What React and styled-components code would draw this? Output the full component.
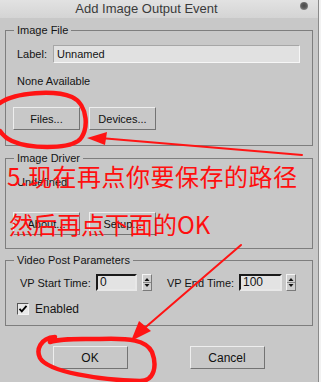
import React from "react";
import styled, { createGlobalStyle } from "styled-components";

const GlobalStyle = createGlobalStyle`
	html, body {
		margin: 0;
		padding: 0;
		background: #c8c8c8;
	}
	body {
		font-family: "Liberation Sans", Arial, sans-serif;
		font-size: 11px;
		color: #141414;
	}
`;

const Page = styled.div`
	position: relative;
	display: flex;
	width: 321px;
	height: 382px;
	overflow: hidden;
`;

const Dialog = styled.div`
	width: 318px;
	flex-shrink: 0;
	display: flex;
	flex-direction: column;
	background: #c8c8c8;
`;

const Edge = styled.div`
	flex: 1;
	background: #f2f2f2;
	border-left: 1px solid #8a8a8a;
`;

const TitleBar = styled.div`
	height: 18px;
	display: flex;
	align-items: flex-start;
	background: linear-gradient(#e2e2e2, #d4d4d4);
`;

const Title = styled.div`
	flex: 1;
	line-height: 18px;
	font-size: 13px;
	color: #3a3a3a;
	text-align: center;
	padding-right: 7px;
`;

const Dot = styled.div`
	width: 8px;
	height: 8px;
	margin: 2px 10px 0 0;
	border-radius: 50%;
	background: radial-gradient(circle at 50% 45%, #4a4a4a 0, #5e5e5e 45%, #b4b4b4 100%);
`;

const Group = styled.div`
	margin: ${(p) => p.$top}px 5px 0;
	border: 1px solid #7e7e7e;
	display: flex;
	flex-direction: column;
`;

const GroupTitle = styled.div`
	align-self: flex-start;
	margin: -8px 0 0 8px;
	padding: 0 3px;
	line-height: 14px;
	background: #c8c8c8;
`;

const GroupBody = styled.div`
	display: flex;
	flex-direction: column;
	padding: ${(p) => p.$pt}px 12px ${(p) => p.$pb}px 11px;
`;

const Row = styled.div`
	display: flex;
	align-items: center;
	margin-top: ${(p) => p.$mt || 0}px;
`;

const FieldLabel = styled.span`
	width: ${(p) => p.$w}px;
	flex-shrink: 0;
	margin-left: ${(p) => p.$ml || 0}px;
	line-height: 14px;
`;

const Text = styled.div`
	line-height: 14px;
	margin-top: ${(p) => p.$mt || 0}px;
`;

const LabelInput = styled.div`
	width: 247px;
	height: 18px;
	box-sizing: border-box;
	border: 1px solid;
	border-color: #a6a6a6 #f6f6f6 #f6f6f6 #a6a6a6;
	background: #e1e1e1;
	padding-left: 3px;
	line-height: 16px;
`;

const NumInput = styled.div`
	width: ${(p) => p.$w}px;
	height: 17px;
	box-sizing: border-box;
	border: 2px solid;
	border-color: #1a1a1a #e8e8e8 #e8e8e8 #1a1a1a;
	background: #e3e3e3;
	padding-left: 2px;
	line-height: 13px;
	font-size: 12px;
`;

const Spinner = styled.div`
	width: 10px;
	height: 17px;
	margin-left: ${(p) => p.$ml}px;
	box-sizing: border-box;
	border: 1px solid;
	border-color: #f4f4f4 #7a7a7a #7a7a7a #f4f4f4;
	background: #cfcfcf;
	display: flex;
	flex-direction: column;
	align-items: center;
	justify-content: center;
`;

const ButtonRow = styled.div`
	display: flex;
	gap: 9px;
	margin: ${(p) => p.$mt}px 0 0 -4px;
`;

const Button = styled.div`
	width: ${(p) => p.$w || 67}px;
	height: 23px;
	box-sizing: border-box;
	border: 1px solid;
	border-color: #eeeeee #737373 #737373 #eeeeee;
	background: #c8c8c8;
	display: flex;
	align-items: center;
	justify-content: center;
	font-size: ${(p) => p.$fs || 11}px;
	color: #101010;
`;

const CheckRow = styled.div`
	display: flex;
	align-items: center;
	gap: 6px;
	margin-top: 11px;
	line-height: 14px;
	font-size: 12px;
`;

const CheckBox = styled.div`
	width: 12px;
	height: 12px;
	box-sizing: border-box;
	border: 1px solid;
	border-color: #555555 #f2f2f2 #f2f2f2 #555555;
	background: #e8e8e8;
	display: flex;
	align-items: center;
	justify-content: center;
`;

const Footer = styled.div`
	display: flex;
	justify-content: center;
	gap: 62px;
	margin-top: 20px;
	padding-right: 1px;
`;

const Ink = styled.svg`
	position: absolute;
	left: 0;
	top: 0;
	pointer-events: none;
`;

const Note = styled.div`
	position: absolute;
	left: ${(p) => p.$x}px;
	top: ${(p) => p.$y}px;
	font-family: "Noto Sans CJK SC", "Noto Sans", sans-serif;
	font-size: 24px;
	line-height: 24px;
	font-weight: 400;
	letter-spacing: ${(p) => p.$ls || 0}px;
	color: #ff0f0f;
	white-space: nowrap;
	pointer-events: none;
`;

const SpinArrows = () => (
	<svg width="8" height="15" viewBox="0 0 8 15">
		<path d="M4 3 L6.5 6 L1.5 6 Z" fill="#111" />
		<line x1="0" y1="7.5" x2="8" y2="7.5" stroke="#8a8a8a" strokeWidth="1" />
		<path d="M1.5 9 L6.5 9 L4 12 Z" fill="#111" />
	</svg>
);

const Check = () => (
	<svg width="10" height="10" viewBox="0 0 10 10">
		<path d="M1.5 4.8 L3.8 7.3 L8.5 1.8" fill="none" stroke="#000" strokeWidth="1.8" />
	</svg>
);

export default function App() {
	return (
		<Page>
			<GlobalStyle />
			<Dialog>
				<TitleBar>
					<Title>Add Image Output Event</Title>
					<Dot />
				</TitleBar>

				<Group $top={12}>
					<GroupTitle>Image File</GroupTitle>
					<GroupBody $pt={8} $pb={15}>
						<Row>
							<FieldLabel $w={36}>Label:</FieldLabel>
							<LabelInput>Unnamed</LabelInput>
						</Row>
						<Text $mt={11}>None Available</Text>
						<ButtonRow $mt={19}>
							<Button>Files...</Button>
							<Button>Devices...</Button>
						</ButtonRow>
					</GroupBody>
				</Group>

				<Group $top={12}>
					<GroupTitle>Image Driver</GroupTitle>
					<GroupBody $pt={10} $pb={13}>
						<Text>Undefined</Text>
						<ButtonRow $mt={23}>
							<Button>About...</Button>
							<Button>Setup...</Button>
						</ButtonRow>
					</GroupBody>
				</Group>

				<Group $top={11}>
					<GroupTitle>Video Post Parameters</GroupTitle>
					<GroupBody $pt={7} $pb={9}>
						<Row>
							<FieldLabel $w={76} $ml={3}>VP Start Time:</FieldLabel>
							<NumInput $w={41}>0</NumInput>
							<Spinner $ml={5}><SpinArrows /></Spinner>
							<FieldLabel $w={72} $ml={15}>VP End Time:</FieldLabel>
							<NumInput $w={43}>100</NumInput>
							<Spinner $ml={4}><SpinArrows /></Spinner>
						</Row>
						<CheckRow>
							<CheckBox><Check /></CheckBox>
							Enabled
						</CheckRow>
					</GroupBody>
				</Group>

				<Footer>
					<Button $w={75} $fs={12}>OK</Button>
					<Button $w={75} $fs={12}>Cancel</Button>
				</Footer>
			</Dialog>
			<Edge />

			<Ink width="321" height="382" viewBox="0 0 321 382">
				<g fill="none" stroke="#ff1414" strokeLinecap="round" strokeLinejoin="round">
					<path strokeWidth="4.5" d="M0 103 C15 92 55 90 72 97 C88 104 90 132 78 141 C66 149 30 149 12 141 C5 138 2 134 0 131" />
					<path strokeWidth="2" d="M302 155 L100 138" />
					<path strokeWidth="2" d="M241 245 L140 332" />
					<path strokeWidth="4.5" d="M55 337 C40 338 36 350 40 358 C48 372 100 380 140 381 C155 381 157 365 152 352 C146 340 130 338 100 339 C80 339 62 338 50 342" />
				</g>
				<g fill="#ff1414">
					<path d="M87 138 L107 132 L105 145 Z" />
					<path d="M131 341 L139 321 L151 331 Z" />
				</g>
			</Ink>
			<Note $x={7} $y={164} $ls={0.5}>5.现在再点你要保存的路径</Note>
			<Note $x={9} $y={212}>然后再点下面的OK</Note>
		</Page>
	);
}
